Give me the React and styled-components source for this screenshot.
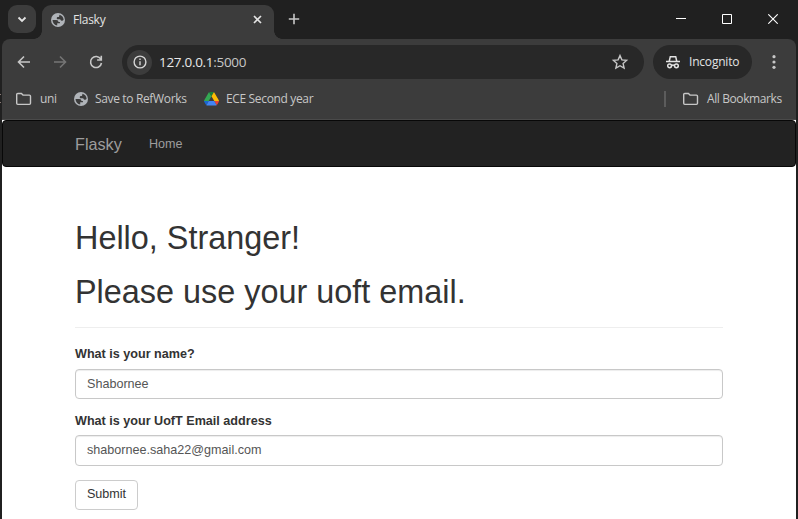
import React from 'react';
import styled, { createGlobalStyle } from 'styled-components';

const Global = createGlobalStyle`
  * { box-sizing: border-box; }
  html, body { margin: 0; background: #fff; }
  body { width: 798px; height: 519px; overflow: hidden; }
`;

const Window = styled.div`
  position: relative;
  width: 798px;
  height: 519px;
  display: flex;
  flex-direction: column;
  overflow: hidden;
  padding: 0 2px;
  background: #202020;
  font-family: 'Open Sans', 'Noto Sans', sans-serif;
  /* sliver of the window behind the left edge */
  &::before {
    content: '';
    position: absolute;
    left: 0;
    top: 94px;
    width: 1px;
    height: 7px;
    border-top: 1px solid #8a7a76;
    border-bottom: 1px solid #8a7a76;
  }
`;

const TabStrip = styled.div`
  height: 39px;
  flex: none;
  display: flex;
  align-items: flex-start;
  padding: 5px 0 0 6px;
`;

const TabSearch = styled.div`
  width: 28px;
  height: 28px;
  border-radius: 9px;
  background: #3c3c3c;
  display: grid;
  place-items: center;
`;

const Tab = styled.div`
  position: relative;
  width: 232px;
  height: 34px;
  margin-left: 6px;
  padding: 0 12px 5px 9px;
  border-radius: 9px 9px 0 0;
  background: #3c3c3c;
  display: flex;
  align-items: center;
  &::before, &::after {
    content: '';
    position: absolute;
    bottom: 0;
    width: 8px;
    height: 8px;
  }
  &::before { left: -8px; background: radial-gradient(circle at 0 0, transparent 7.5px, #3c3c3c 8px); }
  &::after { right: -8px; background: radial-gradient(circle at 100% 0, transparent 7.5px, #3c3c3c 8px); }
`;

const Label = styled.span`
  font-size: ${p => p.$size || 12}px;
  letter-spacing: ${p => p.$track || 0}px;
  line-height: 16px;
  color: ${p => p.$color || '#c7c7c7'};
  white-space: pre;
`;

const TabTitle = styled(Label)`
  flex: 1;
  margin-left: 8px;
`;

const NewTab = styled.div`
  width: 28px;
  height: 28px;
  margin-left: 6px;
  display: grid;
  place-items: center;
`;

const Controls = styled.div`
  margin-left: auto;
  height: 28px;
  display: flex;
  & > span { width: 46px; display: grid; place-items: center; }
`;

const Toolbar = styled.div`
  height: 46px;
  flex: none;
  display: flex;
  align-items: center;
  padding: 0 14px 0 13px;
  border-radius: 8px 8px 0 0;
  background: #3c3c3c;
`;

const NavIcons = styled.div`
  width: 107px;
  display: flex;
  gap: 18px;
`;

const AddressBar = styled.div`
  width: 522px;
  height: 34px;
  border-radius: 17px;
  background: #282828;
  display: flex;
  align-items: center;
  padding: 0 15px 0 5px;
`;

const SiteInfo = styled.span`
  width: 25px;
  height: 25px;
  border-radius: 50%;
  background: #3c3c3c;
  display: grid;
  place-items: center;
  margin-right: 7px;
`;

const Url = styled(Label)`
  flex: 1;
  b { font-weight: 400; color: #e8e8e8; }
`;

const Incognito = styled.div`
  width: 99px;
  height: 34px;
  margin-left: 9px;
  padding-left: 12px;
  border-radius: 17px;
  background: #282828;
  display: flex;
  align-items: center;
  gap: 8px;
`;

const Menu = styled.div`
  margin-left: auto;
  display: flex;
`;

const Bookmarks = styled.div`
  height: 35px;
  flex: none;
  display: flex;
  align-items: center;
  padding: 0 14px 6px 13px;
  background: #3c3c3c;
  border-bottom: 1px solid #4a4a4a;
`;

const Bookmark = styled.div`
  display: flex;
  align-items: center;
  gap: ${p => p.$gap}px;
  width: ${p => p.$width}px;
`;

const Divider = styled.i`
  width: 2px;
  height: 16px;
  margin-left: auto;
  margin-right: 16px;
  background: #5c5c5c;
`;

const Page = styled.main`
  flex: 1;
  background: #fff;
  font-family: 'Liberation Sans', Arial, sans-serif;
  font-size: 12.6px;
  color: #333;
`;

const Navbar = styled.nav`
  height: 47px;
  border: 1px solid #080808;
  border-radius: 4px;
  background: #222;
  color: #9d9d9d;
  display: flex;
  align-items: center;
  padding-left: 72px;
  line-height: 18px;
`;

const Brand = styled.span`
  font-size: 16.2px;
  width: 74px;
  padding-top: 1px;
`;

const Container = styled.div`
  width: 648px;
  margin-left: 73px;
`;

const Header = styled.header`
  padding-top: 53px;
  height: 161px;
  border-bottom: 1px solid #eee;
`;

const Heading = styled.h1`
  margin: 0 0 18px;
  font-size: 32.4px;
  font-weight: 500;
  line-height: 36px;
`;

const Form = styled.form`
  padding-top: 17px;
`;

const Field = styled.div`
  height: ${p => p.$height}px;
`;

const FieldLabel = styled.label`
  display: block;
  height: ${p => p.$height}px;
  font-weight: 700;
  line-height: 18px;
`;

const Input = styled.input`
  display: block;
  width: 100%;
  height: ${p => p.$height}px;
  padding: 0 11px 1px;
  border: 1px solid #c8c8c8;
  border-radius: 4px;
  box-shadow: inset 0 1px 1px rgba(0, 0, 0, 0.075);
  background: #fff;
  color: #555;
  font: inherit;
  outline: none;
`;

const Submit = styled.button`
  width: 63px;
  height: 30px;
  padding: 0 0 2px;
  border: 1px solid #ccc;
  border-radius: 4px;
  background: #fff;
  color: #333;
  font: inherit;
`;

const Svg = ({ w = 16, h = w, box = `0 0 ${w} ${h}`, color = '#c7c7c7', sw = 1.6, children }) => (
  <svg width={w} height={h} viewBox={box} fill="none" stroke={color} strokeWidth={sw}>{children}</svg>
);

const Globe = () => (
  <Svg w={14} box="0 0 16 16">
    <circle cx="8" cy="8" r="8" fill="#b0b4b9" stroke="none" />
    <path d="M1.700 8h4.300c1.700 0 2.500.9 2.500 2.200h1.700v1.600H7.100v2.500c-3.100-.3-5.300-2.900-5.400-6.300zM9.700 1.900c2.700.7 4.600 3 4.700 5.900-.6 1.100-1.500 1.400-2.400 1-1-.4-.8-1.700-2-1.800H7.100c-1-.8-.6-2.300.6-2.500h1.200c.8-.5.3-1.700.8-2.600z" fill="#3c3c3c" stroke="none" />
  </Svg>
);

const Folder = () => (
  <Svg w={17} h={14} sw={1.4}>
    <path d="M1.700 11.300V2.600c0-.7.500-1.100 1.100-1.100h3.600l1.600 1.600h6.400c.7 0 1.100.5 1.100 1.100v7.100c0 .7-.5 1.100-1.100 1.100H2.800c-.7 0-1.100-.5-1.100-1.100z" />
  </Svg>
);

const Drive = () => (
  <Svg w={15} h={13.4} box="0 0 87.300 78">
    <g stroke="none">
      <path d="M6.600 66.850l3.850 6.650c.8 1.400 1.950 2.500 3.300 3.300L27.500 53H0c0 1.550.4 3.100 1.200 4.500z" fill="#1967d2" />
      <path d="M43.650 25L29.900 1.200c-1.350.8-2.500 1.900-3.300 3.300L1.200 48.500A9 9 0 0 0 0 53h27.500z" fill="#34a853" />
      <path d="M73.550 76.800c1.350-.8 2.500-1.900 3.300-3.300l1.600-2.750L86.100 57.500c.8-1.400 1.200-2.950 1.200-4.500H59.800l5.850 11.500z" fill="#ea4335" />
      <path d="M43.650 25L57.400 1.200C56.050.4 54.500 0 52.900 0H34.400c-1.600 0-3.150.45-4.500 1.200z" fill="#188038" />
      <path d="M59.800 53H27.500L13.750 76.800c1.350.8 2.900 1.200 4.500 1.200h50.800c1.600 0 3.150-.45 4.500-1.200z" fill="#4285f4" />
      <path d="M73.400 26.500L60.700 4.500c-.8-1.400-1.950-2.500-3.300-3.300L43.650 25 59.800 53h27.450c0-1.550-.4-3.100-1.200-4.500z" fill="#fbbc04" />
    </g>
  </Svg>
);

export default function App() {
  return (
    <>
      <Global />
      <Window>
        <TabStrip>
          <TabSearch><Svg w={10} color="#e3e3e3" sw={1.8}><path d="M1.500 3.500L5 7l3.500-3.500" /></Svg></TabSearch>
          <Tab>
            <Globe />
            <TabTitle $color="#e3e3e3" $size={12} $track={-0.25}>Flasky</TabTitle>
            <Svg w={9} color="#e3e3e3" sw={1.7}><path d="M1 1l7 7M8 1L1 8" /></Svg>
          </Tab>
          <NewTab><Svg w={12} color="#c7c7c7" sw={1.600}><path d="M6 .8v10.400M.8 6h10.400" /></Svg></NewTab>
          <Controls>
            <span><Svg w={10} color="#fff" sw={1}><path d="M0 4.500h10" /></Svg></span>
            <span><Svg w={10} color="#fff" sw={1}><path d="M.5.5h9v9h-9z" /></Svg></span>
            <span><Svg w={10} color="#fff" sw={1.100}><path d="M.3.3l9.400 9.400M9.700.3L.3 9.700" /></Svg></span>
          </Controls>
        </TabStrip>
        <Toolbar>
          <NavIcons>
            <Svg w={18}><path d="M15 9H4M9 3.500L3.500 9 9 14.500" /></Svg>
            <Svg w={18} color="#757575"><path d="M3 9h11M9 3.500L14.500 9 9 14.500" /></Svg>
            <Svg w={18}><path d="M13.800 6.200A5.500 5.500 0 1 0 14.500 10M14.300 2.800v4.200h-4.200" /></Svg>
          </NavIcons>
          <AddressBar>
            <SiteInfo>
              <Svg w={14} sw={1.400} color="#d5d5d5"><circle cx="7" cy="7" r="5.900" /><path d="M7 6.200v4M7 3.500V5" /></Svg>
            </SiteInfo>
            <Url $size={13.5} $track={-0.3}><b>127.0.0.1</b>:5000</Url>
            <Svg w={18} sw={1.400}><path d="M9 2.600l1.900 4.300 4.700.5-3.500 3.100 1 4.600L9 12.700l-4.100 2.400 1-4.600-3.500-3.100 4.700-.5z" /></Svg>
          </AddressBar>
          <Incognito>
            <Svg w={16} color="#e3e3e3" sw={1.500}>
              <path d="M4.300 7l1-4.300h5.400l1 4.300M1 7.600h14M6.500 11.600c.8-.6 2.200-.6 3 0" />
              <circle cx="4.600" cy="11.800" r="1.900" /><circle cx="11.400" cy="11.800" r="1.900" />
            </Svg>
            <Label $color="#e3e3e3" $size={12} $track={-0.2}>Incognito</Label>
          </Incognito>
          <Menu><Svg w={16}><g fill="#c7c7c7" stroke="none"><circle cx="8" cy="2.700" r="1.600" /><circle cx="8" cy="8" r="1.600" /><circle cx="8" cy="13.300" r="1.600" /></g></Svg></Menu>
        </Toolbar>
        <Bookmarks>
          <Bookmark $gap={8} $width={59}><Folder /><Label $track={-0.3}>uni</Label></Bookmark>
          <Bookmark $gap={7} $width={130}><Globe /><Label $track={-0.35}>Save to RefWorks</Label></Bookmark>
          <Bookmark $gap={7}><Drive /><Label $track={-0.35}>ECE Second year</Label></Bookmark>
          <Divider />
          <Bookmark $gap={8} $width={100}><Folder /><Label $track={-0.4}>All Bookmarks</Label></Bookmark>
        </Bookmarks>
        <Page>
          <Navbar><Brand>Flasky</Brand><span>Home</span></Navbar>
          <Container>
            <Header>
              <Heading>Hello, Stranger!</Heading>
              <Heading>Please use your uoft email.</Heading>
            </Header>
            <Form>
              <Field $height={67}>
                <FieldLabel $height={24}>What is your name?</FieldLabel>
                <Input $height={30} readOnly value="Shabornee" />
              </Field>
              <Field $height={68}>
                <FieldLabel $height={23}>What is your UofT Email address</FieldLabel>
                <Input $height={31} readOnly value="shabornee.saha22@gmail.com" />
              </Field>
              <Submit type="button">Submit</Submit>
            </Form>
          </Container>
        </Page>
      </Window>
    </>
  );
}
